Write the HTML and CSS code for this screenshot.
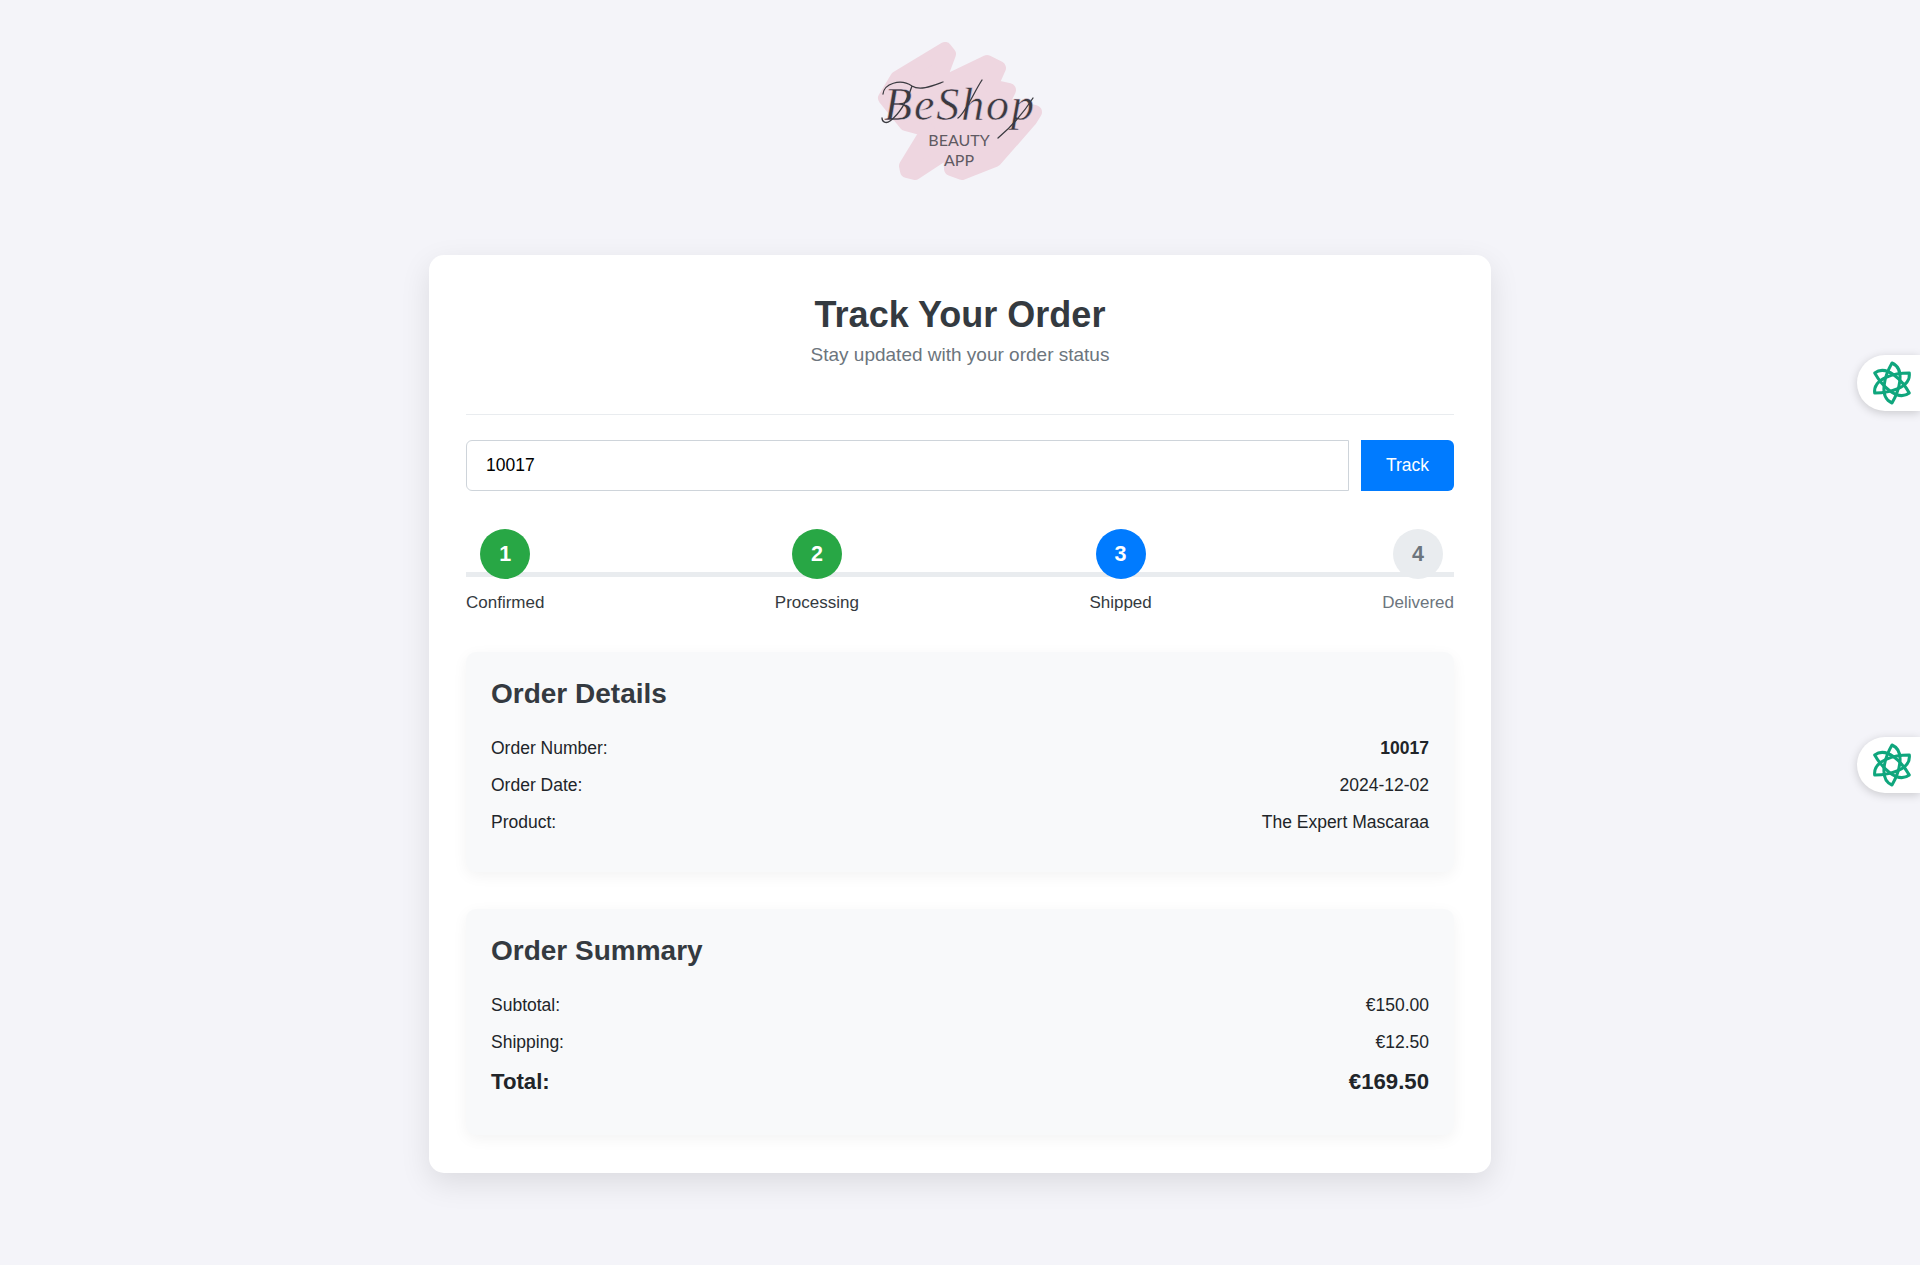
FILE: index.html
```html
<!DOCTYPE html>
<html lang="en">
<head>
    <meta charset="UTF-8">
    <meta name="viewport" content="width=device-width, initial-scale=1.0">
    <title>Track Your Order - BeShop</title>
    <link rel="stylesheet" href="styles.css">
</head>
<body>
    <header class="logo-wrap">
        <svg class="logo" viewBox="0 0 240 180" aria-label="BeShop Beauty App">
            <path class="logo-blob" d="M105 29 L109 34 L97 66 L147 42 L159 48 L151 66 L169 70 L162 84 L195 92 L190 100 L155 140 L122 153 L111 149 L110 130 L75 153 L67 151 L66 146 L88 110 L66 104 L45 78 L57 58 Z"/>
            <text class="logo-script" x="44" y="100" textLength="150" lengthAdjust="spacing">BeShop</text>
            <path class="logo-swash" d="M43 74 C44 64 60 58 72 66 C80 71 92 66 103 62 M72 66 C68 78 62 92 50 101 C46 104 42 102 42 98 M142 60 C134 72 126 92 118 98 M193 78 C184 92 170 108 158 118"/>
            <text class="logo-sub" x="119" y="126" text-anchor="middle">BEAUTY</text>
            <text class="logo-sub" x="119" y="146" text-anchor="middle">APP</text>
        </svg>
    </header>

    <main class="card">
        <div class="card-head">
            <h1>Track Your Order</h1>
            <p>Stay updated with your order status</p>
        </div>

        <form class="track-form">
            <input type="text" class="track-input" value="10017">
            <button type="button" class="track-btn">Track</button>
        </form>

        <div class="stepper">
            <div class="step done">
                <span class="step-num">1</span>
                <span class="step-label">Confirmed</span>
            </div>
            <div class="step done">
                <span class="step-num">2</span>
                <span class="step-label">Processing</span>
            </div>
            <div class="step active">
                <span class="step-num">3</span>
                <span class="step-label">Shipped</span>
            </div>
            <div class="step">
                <span class="step-num">4</span>
                <span class="step-label">Delivered</span>
            </div>
        </div>

        <section class="panel">
            <h2>Order Details</h2>
            <div class="row"><span>Order Number:</span><strong>10017</strong></div>
            <div class="row"><span>Order Date:</span><span>2024-12-02</span></div>
            <div class="row"><span>Product:</span><span>The Expert Mascaraa</span></div>
        </section>

        <section class="panel">
            <h2>Order Summary</h2>
            <div class="row"><span>Subtotal:</span><span>€150.00</span></div>
            <div class="row"><span>Shipping:</span><span>€12.50</span></div>
            <div class="row total"><span>Total:</span><span>€169.50</span></div>
        </section>
    </main>

    <div class="float-btn float-top">
        <svg class="knot" viewBox="0 0 48 48">
            <path d="M24 4 C38 10 31 32 24 44 C10 38 17 16 24 4 Z"/>
            <path transform="rotate(60 24 24)" d="M24 4 C38 10 31 32 24 44 C10 38 17 16 24 4 Z"/>
            <path transform="rotate(120 24 24)" d="M24 4 C38 10 31 32 24 44 C10 38 17 16 24 4 Z"/>
        </svg>
    </div>
    <div class="float-btn float-bottom">
        <svg class="knot" viewBox="0 0 48 48">
            <path d="M24 4 C38 10 31 32 24 44 C10 38 17 16 24 4 Z"/>
            <path transform="rotate(60 24 24)" d="M24 4 C38 10 31 32 24 44 C10 38 17 16 24 4 Z"/>
            <path transform="rotate(120 24 24)" d="M24 4 C38 10 31 32 24 44 C10 38 17 16 24 4 Z"/>
        </svg>
    </div>
</body>
</html>
```

FILE: styles.css
```css
* {
    box-sizing: border-box;
}

body {
    font-family: "Liberation Sans", Arial, sans-serif;
    font-size: 17.5px;
    background-color: #f4f4f9;
    color: #212529;
    margin: 0;
    padding: 20px 0 92px;
    overflow-x: hidden;
}

.logo-wrap {
    display: flex;
    justify-content: center;
    margin-bottom: 55px;
}

.logo {
    display: block;
    width: 240px;
    height: 180px;
}

.logo-blob {
    fill: #eed6e0;
    stroke: #eed6e0;
    stroke-width: 14;
    stroke-linejoin: round;
}

.logo-script {
    font-family: "Liberation Serif", serif;
    font-style: italic;
    font-size: 46px;
    fill: #3a3a40;
    stroke: #eed6e0;
    stroke-width: 0.5;
}

.logo-swash {
    fill: none;
    stroke: #3a3a40;
    stroke-width: 1.3;
    stroke-linecap: round;
}

.logo-sub {
    font-family: "Lato", sans-serif;
    font-size: 16px;
    fill: #5f5a62;
}

.card {
    width: 1062px;
    margin: 0 auto;
    padding: 37px;
    padding-bottom: 38px;
    background: #fff;
    border-radius: 15px;
    box-shadow: 0 10px 30px rgba(0, 0, 0, 0.1);
}

.card-head {
    text-align: center;
    padding-bottom: 41px;
    border-bottom: 1px solid #e9ecef;
    margin-bottom: 25px;
}

.card-head h1 {
    margin: 1px 0 0;
    font-size: 36px;
    line-height: 44px;
    color: #343a40;
}

.card-head p {
    margin: 0;
    font-size: 19px;
    line-height: 36px;
    color: #6c757d;
}

.track-form {
    display: flex;
    gap: 12px;
    margin-bottom: 38px;
}

.track-input {
    flex-grow: 1;
    height: 51px;
    padding: 0 19px;
    font-family: inherit;
    font-size: 17.5px;
    color: #000;
    border: 1px solid #ced4da;
    border-radius: 6px 0 0 6px;
    background: #fff;
}

.track-btn {
    width: 93px;
    height: 51px;
    font-family: inherit;
    font-size: 17.5px;
    color: #fff;
    background-color: #007bff;
    border: none;
    border-radius: 0 6px 6px 0;
    cursor: pointer;
}

.stepper {
    position: relative;
    display: flex;
    justify-content: space-between;
    margin-bottom: 40px;
}

.stepper::before {
    content: "";
    position: absolute;
    left: 0;
    right: 0;
    top: 43px;
    height: 5px;
    background-color: #e9ecef;
}

.step {
    position: relative;
    display: flex;
    flex-direction: column;
    align-items: center;
}

.step-num {
    width: 50px;
    height: 50px;
    border-radius: 50%;
    display: flex;
    align-items: center;
    justify-content: center;
    font-size: 21.5px;
    font-weight: bold;
    color: #6c757d;
    background-color: #e9ecef;
    margin-bottom: 14px;
}

.step-label {
    font-size: 17px;
    line-height: 19px;
    color: #6c757d;
}

.step.done .step-num {
    background-color: #28a745;
    color: #fff;
}

.step.active .step-num {
    background-color: #007bff;
    color: #fff;
}

.step.done .step-label, .step.active .step-label {
    color: #343a40;
}

.panel {
    padding: 25px;
    height: 220px;
    background-color: #f8f9fa;
    border-radius: 10px;
    box-shadow: 0 4px 15px rgba(0, 0, 0, 0.05);
    margin-bottom: 37px;
}

.panel:last-child {
    height: 226px;
    margin-bottom: 0;
}

.panel h2 {
    margin: 1px 0 20px;
    font-size: 28px;
    line-height: 32px;
    color: #343a40;
}

.row {
    display: flex;
    justify-content: space-between;
    line-height: 37px;
}

.row.total {
    font-size: 22.2px;
    font-weight: bold;
    line-height: 42px;
}

.float-btn {
    position: absolute;
    right: 0;
    width: 63px;
    height: 56px;
    background: #fff;
    border-radius: 28px 0 0 28px;
    box-shadow: 0 2px 10px rgba(0, 0, 0, 0.18);
    display: flex;
    align-items: center;
    padding-left: 11px;
}

.float-top {
    top: 355px;
}

.float-bottom {
    top: 737px;
}

.knot {
    flex-shrink: 0;
    width: 48px;
    height: 48px;
    fill: none;
    stroke: #0fa67d;
    stroke-width: 3;
    stroke-linejoin: round;
}
```
